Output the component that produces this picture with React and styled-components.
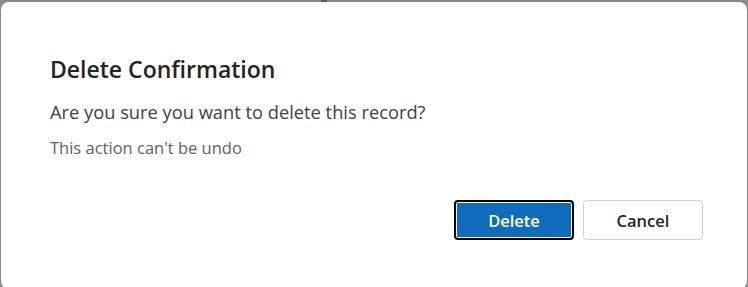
import React from "react";
import styled, { createGlobalStyle } from "styled-components";

const Global = createGlobalStyle`
  html, body { margin: 0; padding: 0; }
  body {
    background: #8a8a8a;
    font-family: "Open Sans", "Noto Sans", "Liberation Sans", sans-serif;
    width: 748px;
    height: 287px;
    overflow: hidden;
  }
`;

const Backdrop = styled.div`
  width: 748px;
  height: 287px;
  padding: 2px 1px 0 1px;
  box-sizing: border-box;
  position: relative;
`;

const Notch = styled.div`
  position: absolute;
  top: 0;
  left: 321px;
  width: 6px;
  height: 2px;
  background: #5c5c5c;
`;

const Dialog = styled.div`
  background: #ffffff;
  border-radius: 8px;
  height: 287px;
  box-sizing: border-box;
  padding: 52px 44px 0 49px;
  display: flex;
  flex-direction: column;
`;

const Title = styled.h2`
  margin: 0;
  font-size: 23px;
  line-height: 30px;
  font-weight: 600;
  color: #242424;
`;

const Message = styled.p`
  margin: ${(p) => p.$top}px 0 0 0;
  font-size: ${(p) => p.$size}px;
  line-height: ${(p) => p.$lh}px;
  color: ${(p) => p.$color};
`;

const Actions = styled.div`
  display: flex;
  justify-content: flex-end;
  gap: 9px;
  margin-top: 41px;
`;

const Button = styled.button`
  width: 120px;
  height: 40px;
  box-sizing: border-box;
  border-radius: 4px;
  font-family: inherit;
  font-size: 16.5px;
  font-weight: 600;
  cursor: pointer;
  background: ${(p) => (p.$primary ? "#0f6cbd" : "#ffffff")};
  color: ${(p) => (p.$primary ? "#ffffff" : "#242424")};
  border: ${(p) => (p.$primary ? "2px solid #000000" : "1px solid #d1d1d1")};
  box-shadow: ${(p) => (p.$primary ? "inset 0 0 0 1px #ffffff" : "none")};
`;

export default function App() {
  return (
    <>
      <Global />
      <Backdrop>
        <Notch />
        <Dialog>
          <Title>Delete Confirmation</Title>
          <Message $top={16} $size={18.3} $lh={24} $color="#424242">
            Are you sure you want to delete this record?
          </Message>
          <Message $top={13} $size={16.5} $lh={22} $color="#616161">
            This action can't be undo
          </Message>
          <Actions>
            <Button $primary>Delete</Button>
            <Button>Cancel</Button>
          </Actions>
        </Dialog>
      </Backdrop>
    </>
  );
}
